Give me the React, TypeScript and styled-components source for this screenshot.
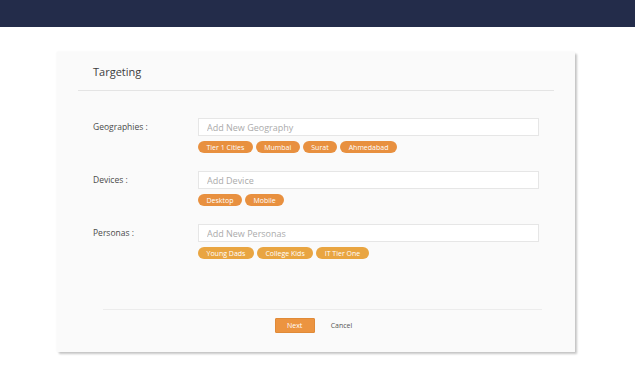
import styled, { createGlobalStyle } from 'styled-components';

const GlobalStyle = createGlobalStyle`
  * {
    box-sizing: border-box;
  }

  body {
    margin: 0;
    background: #ffffff;
    font-family: 'Open Sans', 'Liberation Sans', sans-serif;
  }
`;

type TagTone = 'orange' | 'amber';

const sections: { label: string; placeholder: string; tone: TagTone; tags: string[] }[] = [
  { label: 'Geographies :', placeholder: 'Add New Geography', tone: 'orange', tags: ['Tier 1 Cities', 'Mumbai', 'Surat', 'Ahmedabad'] },
  { label: 'Devices :', placeholder: 'Add Device', tone: 'orange', tags: ['Desktop', 'Mobile'] },
  { label: 'Personas :', placeholder: 'Add New Personas', tone: 'amber', tags: ['Young Dads', 'College Kids', 'IT Tier One'] },
];

const App = () => (
  <Page>
    <GlobalStyle />
    <TopBar />
    <Card>
      <CardHeader>
        <Title>Targeting</Title>
      </CardHeader>
      <Fields>
        {sections.map(section => (
          <FieldRow key={section.label}>
            <Label>{section.label}</Label>
            <FieldBody>
              <TextInput placeholder={section.placeholder} />
              <Tags>
                {section.tags.map(tag => (
                  <Tag key={tag} $tone={section.tone}>{tag}</Tag>
                ))}
              </Tags>
            </FieldBody>
          </FieldRow>
        ))}
      </Fields>
      <Footer>
        <NextButton>Next</NextButton>
        <CancelLink>Cancel</CancelLink>
      </Footer>
    </Card>
  </Page>
);

const Page = styled.div`
  width: 635px;
  height: 381px;
  background: #ffffff;
`;

const TopBar = styled.div`
  height: 27px;
  background: #232c4a;
`;

const Card = styled.div`
  display: flex;
  flex-direction: column;
  width: 518px;
  height: 300px;
  margin: 25px 0 0 57px;
  background: #fafafa;
  box-shadow: 2px 2px 2px rgba(0, 0, 0, 0.22), 0 0 2px rgba(0, 0, 0, 0.06);
`;

const CardHeader = styled.div`
  display: flex;
  align-items: center;
  height: 39px;
  margin: 0 21px;
  padding: 0 15px;
  border-bottom: 1px solid #e4e4e4;
`;

const Title = styled.h2`
  margin: 0;
  font-size: 11px;
  font-weight: 400;
  color: #3d3d3d;
`;

const Fields = styled.div`
  display: flex;
  flex-direction: column;
  gap: 18px;
  padding: 27px 0 0 36px;
`;

const FieldRow = styled.div`
  display: grid;
  grid-template-columns: 105px 341px;
  align-items: start;
`;

const Label = styled.span`
  height: 18px;
  line-height: 18px;
  font-size: 8.5px;
  color: #4a4a4a;
`;

const FieldBody = styled.div`
  display: flex;
  flex-direction: column;
  gap: 5px;
`;

const TextInput = styled.input`
  height: 18px;
  width: 100%;
  padding: 0 8px;
  border: 1px solid #e6e6e6;
  background: #ffffff;
  font-family: inherit;
  font-size: 9px;
  color: #444444;
  outline: none;

  &::placeholder {
    color: #ababab;
  }
`;

const Tags = styled.div`
  display: flex;
  gap: 3px;
`;

const Tag = styled.span<{ $tone: TagTone }>`
  display: inline-flex;
  align-items: center;
  height: 12px;
  padding: 0 8.5px;
  border-radius: 6px;
  background: ${props => (props.$tone === 'amber' ? '#e9a541' : '#e8903f')};
  font-size: 7px;
  color: #ffffff;
`;

const Footer = styled.div`
  display: flex;
  justify-content: center;
  align-items: center;
  gap: 16px;
  height: 43px;
  margin: auto 33px 0 46px;
  padding: 0 18px 12px 0;
  border-top: 1px solid #ececec;
`;

const NextButton = styled.button`
  width: 40px;
  height: 15px;
  padding: 0;
  border: 1px solid #e08a38;
  border-radius: 1px;
  background: #ec9440;
  font-family: inherit;
  font-size: 7px;
  color: #ffffff;
`;

const CancelLink = styled.span`
  font-size: 7px;
  color: #555555;
`;

export default App;
